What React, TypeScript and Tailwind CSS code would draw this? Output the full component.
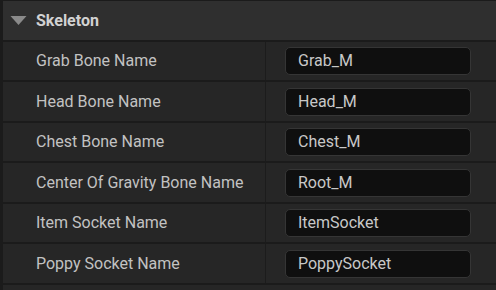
const rows = [
  { label: "Grab Bone Name", value: "Grab_M", h: "h-[38px]" },
  { label: "Head Bone Name", value: "Head_M", h: "h-[39px]" },
  { label: "Chest Bone Name", value: "Chest_M", h: "h-[38px]" },
  { label: "Center Of Gravity Bone Name", value: "Root_M", h: "h-[39px]" },
  { label: "Item Socket Name", value: "ItemSocket", h: "h-[38px]" },
  { label: "Poppy Socket Name", value: "PoppySocket", h: "h-[39px]" },
];

export default function App() {
  return (
    <div
      className="w-[496px] h-[290px] overflow-hidden bg-[#1b1b1b] pt-px pl-[3px]"
      style={{ fontFamily: "Roboto, 'Liberation Sans', sans-serif" }}
    >
      {/* Category header */}
      <div className="h-[39px] bg-[#2f2f2f] flex items-center">
        <svg width="17" height="11" viewBox="0 0 17 11" className="ml-[7px]">
          <path d="M0.5 1 H16.5 L8.5 10 Z" fill="#8a8a8a" />
        </svg>
        <span className="ml-[9px] text-[16px] font-bold text-[#d2d2d2]">Skeleton</span>
      </div>

      {/* Property rows */}
      <div className="flex flex-col">
        {rows.map((r) => (
          <div key={r.label} className={`mt-[2px] flex ${r.h} bg-[#262626]`}>
            <div className="w-[262px] flex items-center pl-[33px] text-[16px] text-[#c2c2c2]">
              {r.label}
            </div>
            <div className="w-px bg-[#1c1c1c]" />
            <div className="flex-1 flex items-center pl-[19px]">
              <div className="w-[186px] h-[28px] rounded-[5px] border border-[#353535] bg-[#0f0f0f] flex items-center pl-[12px] text-[16px] text-[#c8c8c8]">
                {r.value}
              </div>
            </div>
          </div>
        ))}
        <div className="mt-[2px] h-[10px] bg-[#262626]" />
      </div>
    </div>
  );
}
